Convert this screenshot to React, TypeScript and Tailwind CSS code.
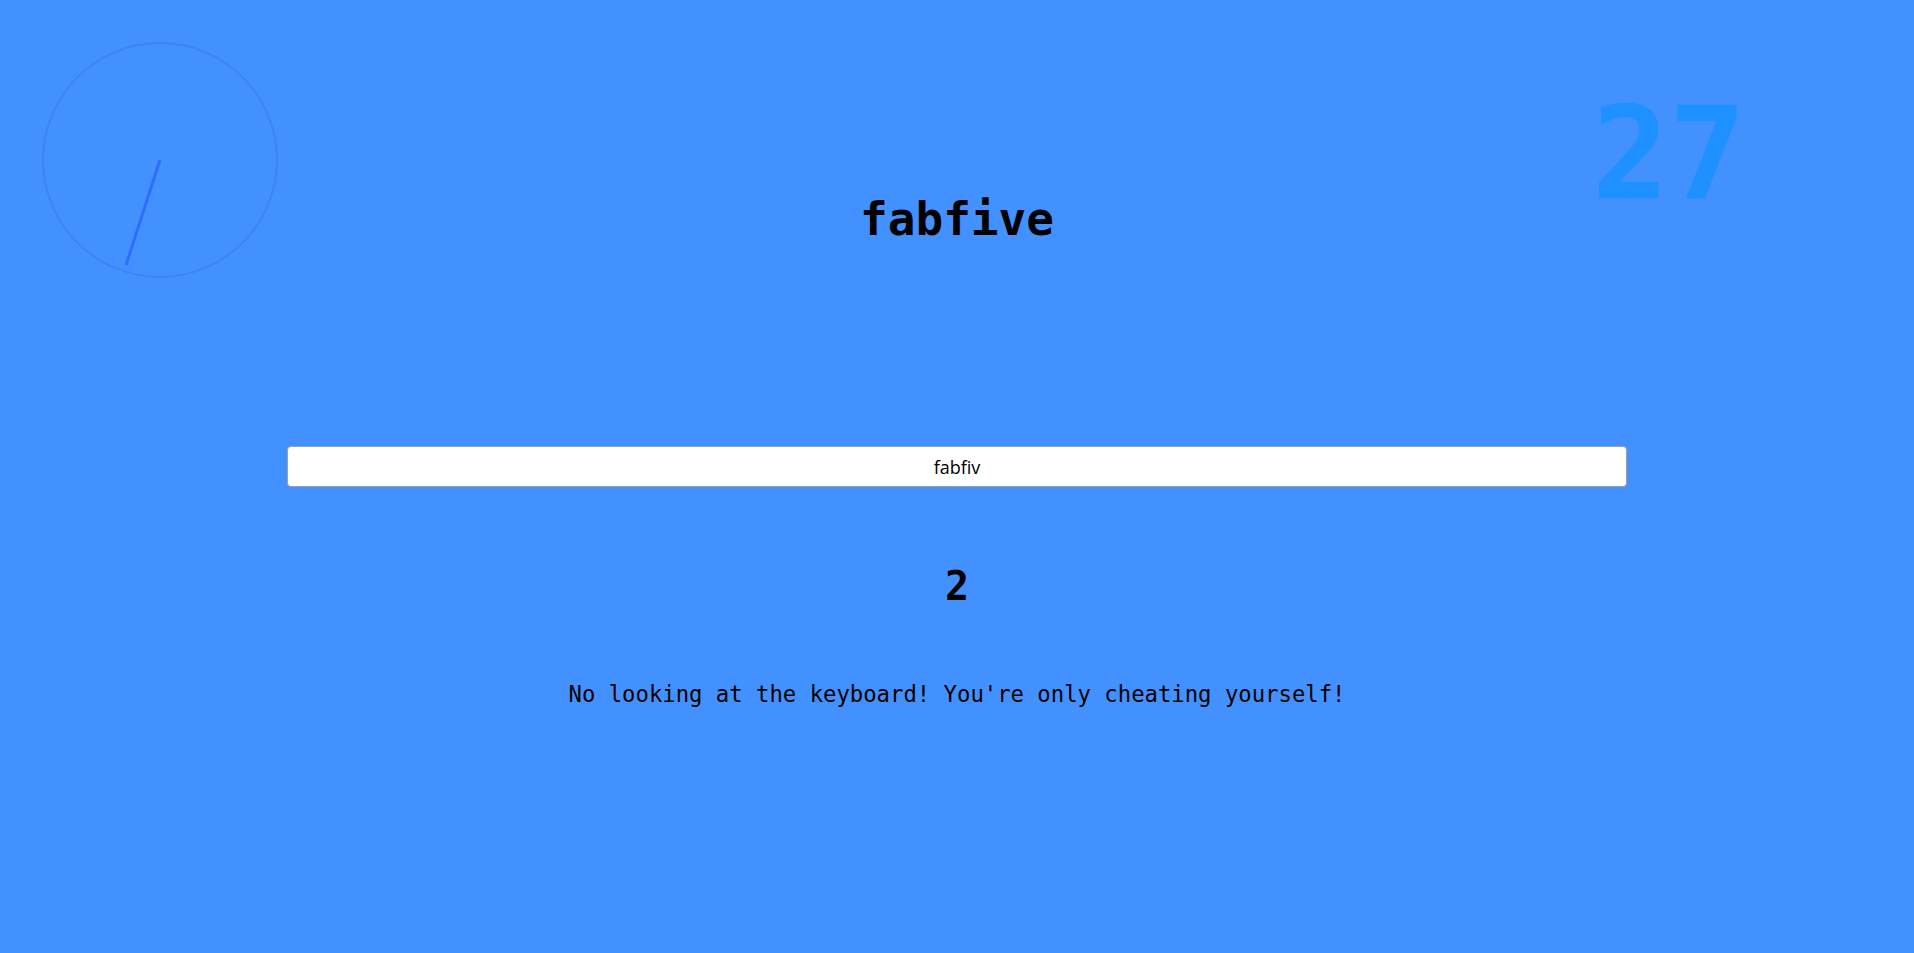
import React from "react";

export default function App() {
  return (
    <div className="relative w-full h-[953px] overflow-hidden bg-[#4391ff] font-['DejaVu_Sans_Mono',monospace]">
      {/* clock overlay */}
      <svg
        className="absolute left-0 top-0"
        width="320"
        height="320"
        viewBox="0 0 320 320"
      >
        <circle cx="160" cy="160" r="117" fill="none" stroke="#3a84f6" strokeWidth="1.8" />
        <line x1="160" y1="160" x2="126" y2="265" stroke="#2f6dff" strokeWidth="3" />
      </svg>

      {/* counter overlay */}
      <div className="absolute left-[1592px] top-[58px] text-[128px] font-bold text-[#1e90ff] leading-normal">
        27
      </div>

      <div className="flex flex-col items-center">
        <h1 className="mt-[185px] text-[46px] font-bold text-black leading-normal">
          fabfive
        </h1>
        <input
          readOnly
          value="fabfiv"
          className="mt-[192px] w-[70%] h-[41px] bg-white border border-[#a0a0a0] rounded-[4px] text-center text-[18px] text-black outline-none font-['Open_Sans',sans-serif]"
        />
        <div className="mt-[69px] text-[40px] font-bold text-black leading-normal">
          2
        </div>
        <p className="mt-[62px] text-[22.25px] text-black leading-normal">
          No looking at the keyboard! You're only cheating yourself!
        </p>
      </div>
    </div>
  );
}
